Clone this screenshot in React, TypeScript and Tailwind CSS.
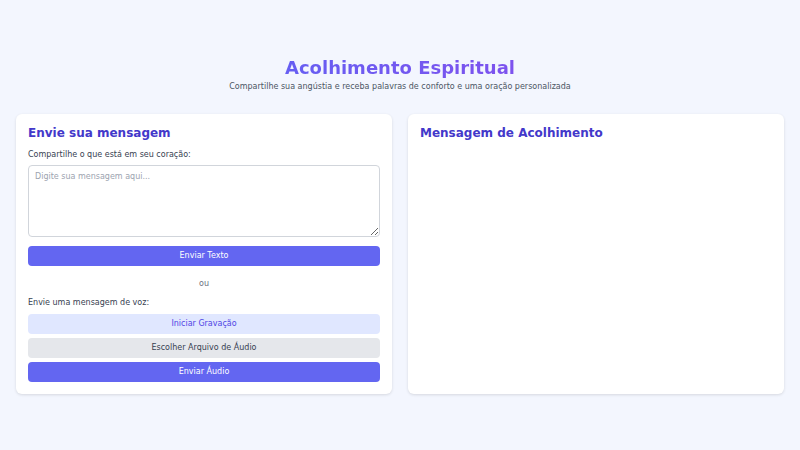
export default function App() {
  return (
    <div className="min-h-screen bg-[#f3f6fe] px-4 pt-[56px] pb-8 font-['DejaVu_Sans',sans-serif]">
      <div className="text-center">
        <h1 className="inline-block bg-gradient-to-r from-[#665ef2] to-[#7d52ee] bg-clip-text text-[18px] font-bold leading-[24px] text-transparent">
          Acolhimento Espiritual
        </h1>
        <p className="text-[8px] leading-[12px] text-[#4b5563]">
          Compartilhe sua angústia e receba palavras de conforto e uma oração personalizada
        </p>
      </div>

      <div className="mt-[21px] grid grid-cols-2 gap-4">
        <div className="flex flex-col rounded-md bg-white p-3 shadow-[0_1px_3px_rgba(0,0,0,0.12)]">
          <h2 className="-mt-[1px] text-[12px] font-bold leading-[16px] text-[#4338ca]">Envie sua mensagem</h2>
          <label className="mt-[8px] text-[8px] leading-[12px] text-[#374151]">
            Compartilhe o que está em seu coração:
          </label>
          <textarea
            className="mt-[4px] h-[72px] w-full resize-y rounded border border-[#d1d5db] px-[6px] py-[5px] text-[8px] leading-[12px] text-[#374151] outline-none placeholder:text-[#9ca3af]"
            placeholder="Digite sua mensagem aqui..."
          />
          <button className="mt-[9px] h-[20px] w-full rounded bg-[#6366f1] text-[8px] text-white">
            Enviar Texto
          </button>
          <div className="mt-[12px] text-center text-[8px] leading-[12px] text-[#6b7280]">ou</div>
          <label className="mt-[7px] text-[8px] leading-[12px] text-[#374151]">Envie uma mensagem de voz:</label>
          <div className="mt-[5px] flex flex-col gap-[4px]">
            <button className="h-[20px] w-full rounded bg-[#e0e7ff] text-[8px] text-[#4f46e5]">
              Iniciar Gravação
            </button>
            <button className="h-[20px] w-full rounded bg-[#e5e7eb] text-[8px] text-[#374151]">
              Escolher Arquivo de Áudio
            </button>
            <button className="h-[20px] w-full rounded bg-[#6366f1] text-[8px] text-white">
              Enviar Áudio
            </button>
          </div>
        </div>

        <div className="rounded-md bg-white p-3 shadow-[0_1px_3px_rgba(0,0,0,0.12)]">
          <h2 className="-mt-[1px] text-[12px] font-bold leading-[16px] text-[#4338ca]">Mensagem de Acolhimento</h2>
        </div>
      </div>
    </div>
  );
}
